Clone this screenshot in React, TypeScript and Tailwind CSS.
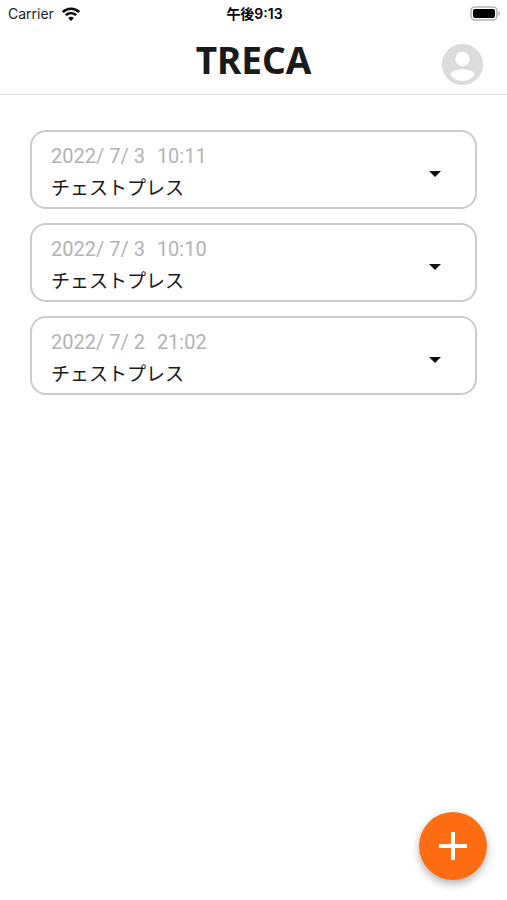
import { useState } from "react";

const records = [
  { id: 1, date: "2022/ 7/ 3", time: "10:11", name: "チェストプレス" },
  { id: 2, date: "2022/ 7/ 3", time: "10:10", name: "チェストプレス" },
  { id: 3, date: "2022/ 7/ 2", time: "21:02", name: "チェストプレス" },
];

const WifiIcon = () => (
  <svg width="18" height="14" viewBox="0 0 18 14" fill="none" aria-hidden="true">
    <path d="M.8 5a11.8 11.8 0 0 1 16.4 0" stroke="#000" strokeWidth="2.6" />
    <path d="M3.8 8.2a7.5 7.5 0 0 1 10.4 0" stroke="#000" strokeWidth="2.4" />
    <path d="M9 14 6.2 11.1a4.1 4.1 0 0 1 5.6 0Z" fill="#000" />
  </svg>
);

const BatteryIcon = () => (
  <svg width="31" height="16" viewBox="0 0 31 16" aria-hidden="true">
    <rect x="1" y="1" width="26" height="13" rx="4" fill="#fff" stroke="#b5b5b5" strokeWidth="1.6" />
    <rect x="3" y="3" width="22" height="9" rx="2" fill="#000" />
    <path d="M28.5 5.2v4.6c1-.4 1.7-1.3 1.7-2.3s-.7-1.9-1.7-2.3Z" fill="#b5b5b5" />
  </svg>
);

const StatusBar = () => (
  <div className="grid h-7 grid-cols-[1fr_auto_1fr] items-center pr-1.5 pl-2 font-['Inter','Noto_Sans_CJK_JP',sans-serif] text-sm text-[#1c1c1c]">
    <div className="flex items-center gap-2">
      <span>Carrier</span>
      <WifiIcon />
    </div>
    <span className="text-center font-semibold text-black">午後9:13</span>
    <div className="flex justify-end">
      <BatteryIcon />
    </div>
  </div>
);

const Header = () => (
  <header className="grid h-[67px] grid-cols-[1fr_auto_1fr] items-start border-b border-[#dcdcdc] px-6">
    <h1 className="col-start-2 font-['Noto_Sans',sans-serif] text-[37px] leading-16 font-bold text-[#1a1a1a]">
      TRECA
    </h1>
    <button type="button" aria-label="アカウント" className="mt-4 justify-self-end">
      <svg width="41" height="41" viewBox="2 2 20 20" fill="#dbdbdb" aria-hidden="true">
        <path d="M12 2C6.48 2 2 6.48 2 12s4.48 10 10 10 10-4.48 10-10S17.52 2 12 2Zm0 3.8a3.5 3.5 0 1 1 0 7 3.5 3.5 0 0 1 0-7Zm0 14.2a7.6 7.6 0 0 1-6.1-3.1c.6-1.9 3.8-2.6 6.1-2.6s5.5.7 6.1 2.6A7.6 7.6 0 0 1 12 20Z" />
      </svg>
    </button>
  </header>
);

const RecordCard = ({ date, time, name }: { date: string; time: string; name: string }) => {
  const [isOpen, setIsOpen] = useState(false);

  return (
    <li className="rounded-2xl border-2 border-[#cbcbcb]">
      <button
        type="button"
        aria-expanded={isOpen}
        onClick={() => setIsOpen(!isOpen)}
        className="flex w-full items-center justify-between pt-2 pr-[34px] pb-1.5 pl-[19px] text-left"
      >
        <span className="flex flex-col">
          <span className="flex gap-3 font-['Roboto',sans-serif] text-xl leading-8 text-[#b3b3b3]">
            <span>{date}</span>
            <span>{time}</span>
          </span>
          <span className="font-['Noto_Sans_CJK_JP',sans-serif] text-[19px] leading-[29px] text-[#1a1a1a]">
            {name}
          </span>
        </span>
        <svg
          width="12"
          height="6"
          viewBox="0 0 12 6"
          className={isOpen ? "mt-1.5 rotate-180" : "mt-1.5"}
          aria-hidden="true"
        >
          <path d="M0 0h12L6 6Z" fill="#111" />
        </svg>
      </button>
    </li>
  );
};

const App = () => {
  return (
    <div className="min-h-screen bg-white">
      <StatusBar />
      <Header />
      <main className="px-[30px] pt-[35px] pb-28">
        <ul className="flex flex-col gap-3.5">
          {records.map(({ id, date, time, name }) => (
            <RecordCard key={id} date={date} time={time} name={name} />
          ))}
        </ul>
      </main>
      <button
        type="button"
        aria-label="追加"
        className="fixed right-5 bottom-5 flex size-[68px] items-center justify-center rounded-full bg-[#ff6d12] shadow-[0_4px_8px_rgba(0,0,0,0.3)]"
      >
        <svg width="28" height="28" viewBox="0 0 28 28" aria-hidden="true">
          <path d="M14 0v28M0 14h28" stroke="#fff" strokeWidth="4" />
        </svg>
      </button>
    </div>
  );
};

export default App;
